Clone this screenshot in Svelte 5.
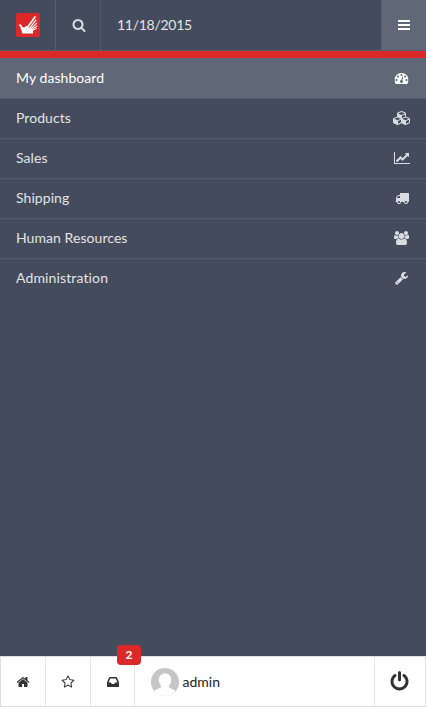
<script>
  const paths = {
    search: 'M1216 832q0-185-131.5-316.5t-316.5-131.5-316.5 131.5-131.5 316.5 131.5 316.5 316.5 131.5 316.5-131.5 131.5-316.5zm512 832q0 52-38 90t-90 38q-54 0-90-38l-343-342q-179 124-399 124-143 0-273.5-55.5t-225-150-150-225-55.5-273.5 55.5-273.5 150-225 225-150 273.5-55.5 273.5 55.5 225 150 150 225 55.5 273.5q0 220-124 399l343 343q37 37 37 90z',
    bars: 'M128 256h1536v256H128zM128 768h1536v256H128zM128 1280h1536v256H128z',
    dashboard: 'M384 1152q0-53-37.5-90.5t-90.5-37.5-90.5 37.5-37.5 90.5 37.5 90.5 90.5 37.5 90.5-37.5 37.5-90.5zm192-448q0-53-37.5-90.5t-90.5-37.5-90.5 37.5-37.5 90.5 37.5 90.5 90.5 37.5 90.5-37.5 37.5-90.5zm428 481l101-382q6-26-7.5-48.5t-38.5-29.5-48 6.5-30 39.5l-101 382q-60 5-107 43.5t-63 98.5q-20 77 20 146t117 89 146-20 89-117q16-60-6-117t-72-91zm660-33q0-53-37.5-90.5t-90.5-37.5-90.5 37.5-37.5 90.5 37.5 90.5 90.5 37.5 90.5-37.5 37.5-90.5zm-640-640q0-53-37.5-90.5t-90.5-37.5-90.5 37.5-37.5 90.5 37.5 90.5 90.5 37.5 90.5-37.5 37.5-90.5zm448 192q0-53-37.5-90.5t-90.5-37.5-90.5 37.5-37.5 90.5 37.5 90.5 90.5 37.5 90.5-37.5 37.5-90.5zm320 448q0 261-141 483-19 29-54 29h-1402q-35 0-54-29-141-221-141-483 0-182 71-348t191-286 286-191 348-71 348 71 286 191 191 286 71 348z',
    cubes: 'M640 1632l384-192v-314l-384 164v342zm-64-454l404-173-404-173-404 173zm1088 454l384-192v-314l-384 164v342zm-64-454l404-173-404-173-404 173zm-448-293l384-165v-266l-384 164v267zm-64-379l441-189-441-189-441 189zm1088 518v416q0 36-19 67t-52 47l-448 224q-25 14-57 14t-57-14l-448-224q-5-2-7-4-2 2-7 4l-448 224q-25 14-57 14t-57-14l-448-224q-33-16-52-47t-19-67v-416q0-38 21.5-70t56.5-48l434-186v-400q0-38 21.5-70t56.5-48l448-192q23-10 50-10t50 10l448 192q35 16 56.5 48t21.5 70v400l434 186q36 16 57 48t21 70z',
    chart: 'M2048 1536v128h-2048v-1536h128v1408h1920zm-128-1248v435q0 21-19.5 29.5t-35.5-7.5l-121-121-633 633q-10 10-23 10t-23-10l-233-233-416 416-192-192 585-585q10-10 23-10t23 10l233 233 464-464-121-121q-16-16-7.5-35.5t29.5-19.5h435q14 0 23 9t9 23z',
    truck: 'M640 1408q0-52-38-90t-90-38-90 38-38 90 38 90 90 38 90-38 38-90zm-384-512h384v-256h-158q-13 0-22 9l-195 195q-9 9-9 22v30zm1280 512q0-52-38-90t-90-38-90 38-38 90 38 90 90 38 90-38 38-90zm256-1088v1024q0 15-4 26.5t-13.5 18.5-16.5 11.5-23.5 6-22.5 2-25.5 0-22.5-.5q0 106-75 181t-181 75-181-75-75-181h-384q0 106-75 181t-181 75-181-75-75-181h-64q-3 0-22.5.5t-25.5 0-22.5-2-23.5-6-16.5-11.5-13.5-18.5-4-26.5q0-26 19-45t45-19v-320q0-8-.5-35t0-38 2.5-34.5 6.5-37 14-30.5 22.5-30l198-198q19-19 50.5-32t58.5-13h160v-192q0-26 19-45t45-19h1024q26 0 45 19t19 45z',
    users: 'M593 896q-162 5-265 128h-134q-82 0-138-40.5t-56-118.5q0-353 124-353 6 0 43.5 21t97.5 42.5 119 21.5q67 0 133-23-5 37-5 66 0 159 93 291zm1071 637q0 120-73 189.5t-194 69.5h-874q-121 0-194-69.5t-73-189.5q0-53 3.5-103.5t14-109 26.5-108.5 43-97.5 62-81 85.5-53.5 111.5-20q10 0 43 21.5t73 48 107 48 135 21.5 135-21.5 107-48 73-48 43-21.5q61 0 111.5 20t85.5 53.5 62 81 43 97.5 26.5 108.5 14 109 3.5 103.5zm-1024-1277q0 106-75 181t-181 75-181-75-75-181 75-181 181-75 181 75 75 181zm704 384q0 159-112.5 271.5t-271.5 112.5-271.5-112.5-112.5-271.5 112.5-271.5 271.5-112.5 271.5 112.5 112.5 271.5zm576 225q0 78-56 118.5t-138 40.5h-134q-103-123-265-128 93-132 93-291 0-29-5-66 66 23 133 23 59 0 119-21.5t97.5-42.5 43.5-21q124 0 124 353zm-128-609q0 106-75 181t-181 75-181-75-75-181 75-181 181-75 181 75 75 181z',
    wrench: 'M448 1472q0-26-19-45t-45-19-45 19-19 45 19 45 45 19 45-19 19-45zm644-420l-682 682q-37 37-90 37-52 0-91-37l-106-108q-38-36-38-90 0-53 38-91l681-681q39 98 114.5 173.5t173.5 114.5zm634-435q0 39-23 106-47 134-164.5 217.5t-258.5 83.5q-185 0-316.5-131.5t-131.5-316.5 131.5-316.5 316.5-131.5q58 0 121.5 16.5t107.5 46.5q16 11 16 28t-16 28l-293 169v224l193 107q5-3 79-48.5t135.5-81 70.5-35.5q15 0 23.5 10t8.5 25z',
    home: 'M1472 992v480q0 26-19 45t-45 19h-384v-384h-256v384h-384q-26 0-45-19t-19-45v-480q0-1 .5-3t.5-3l575-474 575 474q1 2 1 6zm223-69l-62 74q-8 9-21 11h-3q-13 0-21-7l-692-577-692 577q-12 8-24 7-13-2-21-11l-62-74q-8-10-7-23.5t11-21.5l719-599q32-26 76-26t76 26l244 204v-195q0-14 9-23t23-9h192q14 0 23 9t9 23v408l219 182q10 8 11 21.5t-7 23.5z',
    star: 'M1201 1004l306-297-422-62-189-382-189 382-422 62 306 297-73 421 378-199 377 199zm527-357q0 22-26 48l-363 354 86 500q1 7 1 20 0 50-41 50-19 0-40-12l-449-236-449 236q-22 12-40 12-21 0-31.5-14.5t-10.5-35.5q0-6 2-20l86-500-364-354q-25-27-25-48 0-37 56-46l502-73 225-455q19-41 49-41t49 41l225 455 502 73q56 9 56 46z',
    inbox: 'M1151 960h316q-1-3-2.5-8t-2.5-8l-212-496h-708l-212 496q-1 2-2.5 8t-2.5 8h316l95 192h320zm513 30v482q0 26-19 45t-45 19h-1408q-26 0-45-19t-19-45v-482q0-62 25-123l238-552q10-25 36.5-42t52.5-17h832q26 0 52.5 17t36.5 42l238 552q25 61 25 123z',
    power: 'M1664 896q0 156-61 298t-164 245-245 164-298 61-298-61-245-164-164-245-61-298q0-182 80.5-343t226.5-270q43-32 95.5-25t83.5 50q32 42 24.5 94.5t-49.5 84.5q-98 74-151.5 181t-53.5 228q0 104 40.5 198.5t109.5 163.5 163.5 109.5 198.5 40.5 198.5-40.5 163.5-109.5 109.5-163.5 40.5-198.5q0-121-53.5-228t-151.5-181q-42-32-49.5-84.5t24.5-94.5q31-43 84-50t95 25q146 109 226.5 270t80.5 343zm-640-768v640q0 52-38 90t-90 38-90-38-38-90v-640q0-52 38-90t90-38 90 38 38 90z'
  };
  const items = [
    { label: 'My dashboard', icon: 'dashboard', w: 1792, active: true },
    { label: 'Products', icon: 'cubes', w: 2304 },
    { label: 'Sales', icon: 'chart', w: 2048 },
    { label: 'Shipping', icon: 'truck', w: 1792 },
    { label: 'Human Resources', icon: 'users', w: 1920 },
    { label: 'Administration', icon: 'wrench', w: 1792 }
  ];
</script>

{#snippet icon(name, size = 14, w = 1792)}
  <svg class="icon" viewBox="0 0 {w} 1792" width={(size * w) / 1792} height={size} aria-hidden="true"><path d={paths[name]} /></svg>
{/snippet}

<div class="app">
  <header>
    <a class="cell logo" href="#home" aria-label="Home">
      <svg width="24" height="24" viewBox="0 0 24 24">
        <rect width="24" height="24" rx="1.5" fill="#db2828" />
        <path d="M2.3 12 L4.8 11.2 L6.8 14.3 Q8.6 15 10.6 12.8 L13 15 L17.4 16.6 Q16.8 18.5 17 20.6 L6 20.6 Q6.4 18.2 4.9 16.2 L4.2 13.2 Z" fill="#fff" />
        <g stroke="#fff" stroke-linecap="round" fill="none">
          <path d="M11.6 14.2 L19 3.9" stroke-width="1.7" />
          <path d="M13.8 14.8 L20 7.2" stroke-width="1.25" />
          <path d="M14.8 15.8 L20.6 10.4" stroke-width="1.15" />
          <path d="M15.4 16.6 L20.8 13.2" stroke-width="1.1" />
          <path d="M16 17.3 L20.3 15.7" stroke-width="1" />
        </g>
      </svg>
    </a>
    <button class="cell search" aria-label="Search">{@render icon('search')}</button>
    <div class="date">11/18/2015</div>
    <button class="toggle" aria-label="Menu">{@render icon('bars')}</button>
  </header>
  <nav>
    {#each items as item}
      <a class="item" class:active={item.active} href="#menu">
        <span>{item.label}</span>
        <span class="icon-box {item.icon}">{@render icon(item.icon, 14, item.w)}</span>
      </a>
    {/each}
  </nav>
  <footer>
    <button class="tool" aria-label="Home">{@render icon('home')}</button>
    <button class="tool" aria-label="Favorites">{@render icon('star')}</button>
    <button class="tool inbox" aria-label="Inbox">{@render icon('inbox')}<span class="badge">2</span></button>
    <div class="user">
      <svg width="28" height="28" viewBox="0 0 28 28">
        <defs><clipPath id="avatar"><circle cx="14" cy="14" r="14" /></clipPath></defs>
        <g clip-path="url(#avatar)">
          <rect width="28" height="28" fill="#c5c5c5" />
          <path d="M14 5.6c3.9 0 6.2 2.5 6.2 6.3 0 2.6-1 4.7-2.3 5.9v1c0 1.5 5.4 2 6.7 4.6V28H3.4v-4.6c1.3-2.6 6.7-3.1 6.7-4.6v-1c-1.3-1.2-2.3-3.3-2.3-5.9 0-3.8 2.3-6.3 6.2-6.3z" fill="#fff" />
        </g>
      </svg>
      <span>admin</span>
    </div>
    <button class="power" aria-label="Sign out">{@render icon('power', 21)}</button>
  </footer>
</div>

<style>
  :global(body) { margin: 0; }
  .app, .app * { box-sizing: border-box; }
  .app {
    display: flex;
    flex-direction: column;
    height: 707px;
    background: #434b5d;
    color: #e3e4e7;
    font: 14px/20px Lato, sans-serif;
    font-variant-ligatures: none;
  }
  button { padding: 0; border: 0; background: none; color: inherit; font: inherit; }
  a { color: inherit; text-decoration: none; }
  svg { display: block; flex: none; }
  .icon { fill: currentColor; }
  header {
    display: flex;
    height: 58px;
    border-bottom: 7px solid #db2828;
    box-shadow: inset 0 -1px #565e6f;
  }
  .cell { display: flex; align-items: center; justify-content: center; height: 50px; border-right: 1px solid #535b6c; }
  .logo { width: 56px; }
  .search { width: 45px; padding-left: 1px; color: #d9dbdf; }
  .date { flex: 1; padding: 15px 16px; letter-spacing: -0.27px; }
  .toggle {
    display: flex;
    align-items: center;
    justify-content: center;
    width: 45px;
    height: 50px;
    border-left: 1px solid #565e6f;
    background: #606777;
    color: #fff;
  }
  nav { flex: 1; letter-spacing: 0.06px; }
  .item {
    display: flex;
    align-items: center;
    justify-content: space-between;
    height: 40px;
    padding: 0 16px;
  }
  .item:last-child { letter-spacing: 0.13px; }
  .item + .item { box-shadow: inset 0 1px #535b6c; }
  .item.active { background: #606777; color: #fff; }
  .icon-box { display: flex; justify-content: center; width: 17px; color: #d9dbdf; }
  .active .icon-box { color: #fff; }
  .icon-box.cubes { justify-content: flex-start; }
  .dashboard svg, .wrench svg { transform: translateX(-0.5px); }
  footer {
    display: flex;
    height: 51px;
    border: 1px solid #dedede;
    background: #fff;
    color: #333;
  }
  .tool { display: flex; align-items: center; justify-content: center; width: 45px; border-right: 1px solid #e5e5e5; }
  .inbox { position: relative; width: 44px; }
  .badge {
    position: absolute;
    top: -12px;
    right: -7px;
    width: 24px;
    height: 20px;
    border-radius: 4px;
    background: #db2828;
    color: #fff;
    font-size: 12px;
    font-weight: 700;
    line-height: 20px;
    text-align: center;
  }
  .user { display: flex; flex: 1; align-items: center; gap: 3.5px; padding-left: 16px; color: #222; }
  .power { display: flex; align-items: center; justify-content: center; width: 51px; padding-right: 1px; border-left: 1px solid #e5e5e5; }
</style>
